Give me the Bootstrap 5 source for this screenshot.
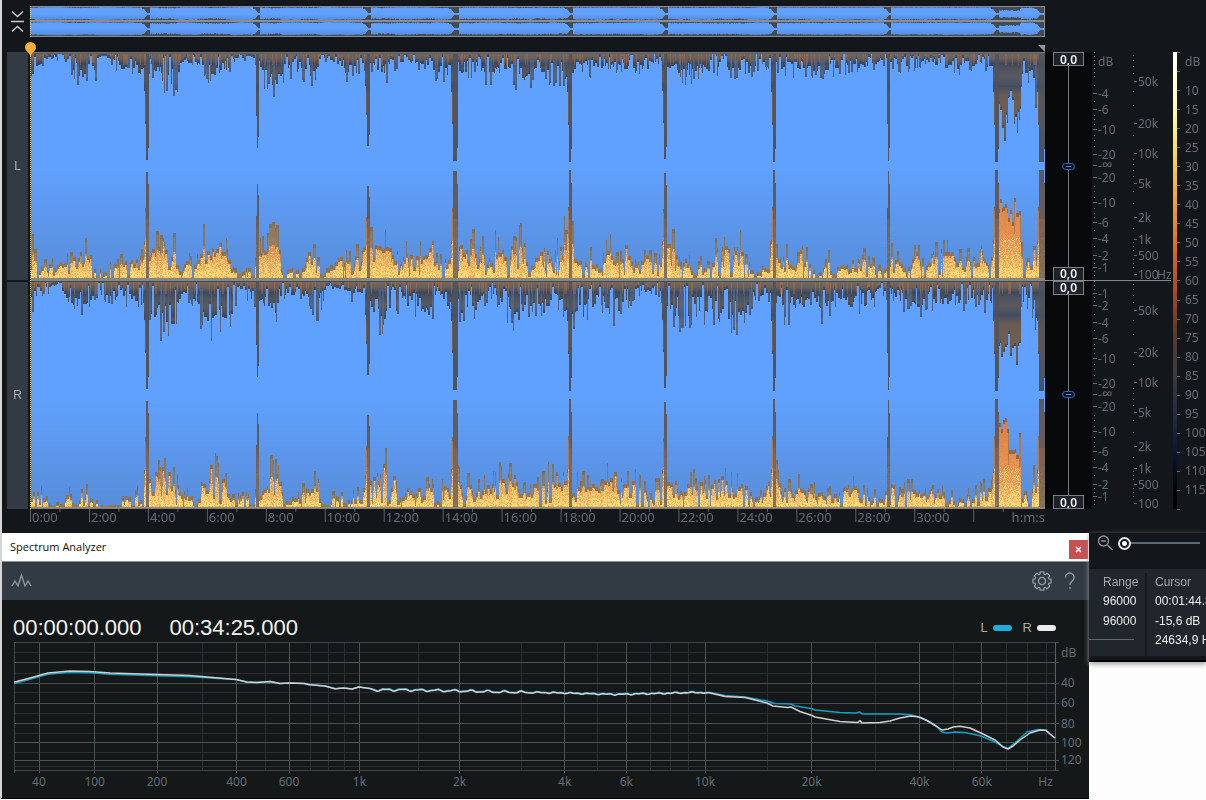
<!DOCTYPE html>
<html lang="en">
<head>
<meta charset="utf-8">
<meta name="viewport" content="width=device-width, initial-scale=1">
<title>Spectrum Analyzer</title>
<link rel="stylesheet" href="https://cdn.jsdelivr.net/npm/bootstrap@5.3.0/dist/css/bootstrap.min.css">
<style>
:root{--ink:#13171b;--dim:#646c72;--bar:#323a43}
body{background:#fdfdfd;font-family:"Liberation Sans",Arial,sans-serif;font-size:12px;line-height:18px;overflow-x:hidden}
svg{display:block}
.scale{font-family:"Noto Sans","Open Sans",sans-serif;font-size:12px;fill:var(--dim)}
.editor{background:var(--ink);border-left:2px solid #d5d5d5;padding-top:6px}
.gutter{width:28px}
.side{width:161px}
.overview{height:31px}
.overview canvas,.waves canvas{width:100%;height:100%;display:block}
.pins{height:15px}
.waves{height:457px}
.channel-tag{background:var(--bar);color:#a9afb5;margin-left:5px;margin-right:2px}
.gain{width:47px;background:#08090b}
.gain-rail{width:1px;background:#72767a}
.gain-box{width:31px;height:14px;background:#1c2227;border:1px solid #7b8085;color:#eee;font:600 12px/12px "Noto Sans",sans-serif;text-align:center;padding:0}
.gain-knob{width:13px;height:7px;border:1px solid #2a6fc4;border-radius:4px;background:#08131f;padding:0}
.gain-knob::before{content:"";display:block;width:5px;height:1px;margin:2px auto;background:#4b94ee}
.playhead{left:0;top:4px;width:1px;height:453px;background:repeating-linear-gradient(#e6cf4e 0 1px,#222 1px 2px)}
.pin{left:-6px;top:-10px}
.endmark{right:0;top:-7px}
.timeline{height:24px}
.timeline svg{font-size:13px}
.analyzer{background:#141819;border-left:2px solid #d5d5d5;border-bottom:1px solid #000;height:266px;min-width:0}
.title-row{height:29px;background:#fff;color:#111;font-family:"Open Sans","Noto Sans",sans-serif;font-size:11px;border-bottom:1px solid #8b9094}
.close-btn{width:19px;height:19px;background:#c75050;color:#fff;border:0;padding:0;margin-top:4px;margin-right:1px}
.tool-row{height:38px;background:var(--bar);gap:10px;padding-left:8px;padding-right:12px}
.tool-row button{background:none;border:0;padding:0;color:#949ba2}
.clock-row{padding:15px 33px 1px 11px}
.clock{font-size:22px;line-height:26px;color:#f1f1f1}
.swatch-l,.swatch-r{width:19px;height:6px;border-radius:3px}
.swatch-l{background:#1eaddb;margin-right:11px}
.swatch-r{background:#ececec}
.legend-text{font-size:13px;color:#a4a9ad;margin-right:5px}
.plot-row{padding-left:12px}
.freq-row{padding-left:12px;padding-right:34px}
.plot{height:128px;min-width:0}
.info{width:117px;height:129px;background:var(--ink);border-bottom:2px solid #000;box-shadow:0 2px 5px #999;overflow:hidden;white-space:nowrap}
.zoom-row{height:36px;padding-bottom:16px;padding-left:8px}
.readouts{height:87px;background:#20262b;color:#ededed}
.readouts h2{font-size:12px;line-height:18px;margin:0;color:#a2a7ab;font-weight:400}
.range-col{width:58px;border-right:2px solid #15191c}
.range-col p{margin:0;line-height:20px}
.range-text{padding-left:14px}
.range-end{height:1px;width:45px;background:#5f686e}
.zoom{appearance:none;width:82px;height:14px;background:linear-gradient(#5a6a72,#5a6a72) 8px 6px/74px 2px no-repeat}
.zoom::-webkit-slider-thumb{appearance:none;width:13px;height:13px;border-radius:50%;background:radial-gradient(circle,#fff 0 2px,#14181c 3px 4px,#e8e8e8 5px)}
</style>
</head>
<body>
<main class="editor">
  <div class="d-flex">
    <div class="gutter flex-shrink-0">
      <svg width="28" height="31" fill="none" stroke="#c5c9cc" stroke-width="1.500"><path d="M10 5.500l5.500 5 5.500-5M10 25.500l5.500-5 5.500 5M9 15.500h13"/></svg>
    </div>
    <div class="overview flex-grow-1"><canvas id="overview" width="1015" height="31" aria-label="Overview"></canvas></div>
    <div class="side flex-shrink-0"></div>
  </div>
  <div class="pins"></div>
  <div class="d-flex waves">
    <div class="gutter flex-shrink-0 d-flex flex-column" style="gap:2px">
      <div class="channel-tag flex-fill d-flex align-items-center justify-content-center">L</div>
      <div class="channel-tag flex-fill d-flex align-items-center justify-content-center">R</div>
    </div>
    <div class="flex-grow-1 position-relative">
      <canvas id="wave" width="1015" height="457" aria-label="Waveform and spectrogram"></canvas>
      <div class="playhead position-absolute"></div>
      <svg class="pin position-absolute" width="13" height="15"><path d="M6.500 14.500C5 10 1 9 1 5.500A5.500 5.500 0 0 1 12 5.500C12 9 8 10 6.500 14.500z" fill="#f5ae35"/></svg>
      <svg class="endmark position-absolute" width="7" height="7"><path d="M0 0h7v7z" fill="#92969a"/></svg>
    </div>
    <div class="side flex-shrink-0 d-flex">
      <div class="gain flex-shrink-0 d-flex flex-column" id="gain"></div>
      <svg class="scale flex-shrink-0" id="rulers" width="114" height="457" overflow="visible"></svg>
    </div>
  </div>
  <div class="timeline d-flex">
    <div class="gutter flex-shrink-0"></div>
    <div class="flex-grow-1"><svg class="scale" id="times" width="100%" height="24"></svg></div>
    <div class="side flex-shrink-0"></div>
  </div>
</main>

<div class="d-flex align-items-start">
  <section class="analyzer flex-grow-1 d-flex flex-column">
    <header class="title-row d-flex align-items-center justify-content-between ps-2 flex-shrink-0">
      <span>Spectrum Analyzer</span>
      <button class="close-btn d-flex align-items-center justify-content-center" type="button" aria-label="Close"><svg width="7" height="7" stroke="#fff" stroke-width="1.500"><path d="M1 1l5 5M6 1l-5 5"/></svg></button>
    </header>
    <div class="tool-row d-flex align-items-center flex-shrink-0">
      <button type="button" aria-label="Spectrum"><svg width="22" height="16" fill="none" stroke="currentColor" stroke-width="1.300"><path d="M2 13L5 8l3 5L11.500 2l3.500 11 3-5 3 5"/></svg></button>
      <button class="ms-auto" type="button" aria-label="Settings"><svg id="gear" width="22" height="22" viewBox="-11 -11 22 22" fill="none" stroke="currentColor" stroke-width="1.300"></svg></button>
      <button type="button" aria-label="Help"><svg width="14" height="20" fill="none" stroke="currentColor" stroke-width="1.400"><path d="M2.500 6.500a4.300 4.300 0 1 1 7.200 3C8 11 7 11.500 7 14M7 16v2"/></svg></button>
    </div>
    <div class="clock-row d-flex align-items-center flex-shrink-0">
      <span class="clock me-4">00:00:00.000</span><span class="clock ms-1">00:34:25.000</span>
      <span class="legend-text ms-auto">L</span><span class="swatch-l"></span>
      <span class="legend-text">R</span><span class="swatch-r"></span>
    </div>
    <div class="plot-row d-flex flex-shrink-0">
      <svg class="plot flex-grow-1" id="plot" viewBox="14 642 1041 128" preserveAspectRatio="none" width="100" overflow="visible" fill="none"></svg>
      <svg class="scale flex-shrink-0" id="levels" width="34" height="129"></svg>
    </div>
    <div class="freq-row"><svg class="scale" id="freqs" width="100%" height="24" overflow="visible"></svg></div>
  </section>
  <aside class="info flex-shrink-0">
    <div class="zoom-row d-flex align-items-center gap-1">
      <svg class="flex-shrink-0" width="17" height="18" fill="none" stroke="#8d9398" stroke-width="1.400"><circle cx="6.500" cy="7" r="5"/><path d="M4 7h5M10.500 11l5 5"/></svg>
      <input class="zoom flex-shrink-0" type="range" min="0" max="100" value="0" aria-label="Zoom">
    </div>
    <div class="readouts d-flex pt-1">
      <div class="range-col flex-shrink-0">
        <div class="range-text"><h2>Range</h2><p>96000</p><p>96000</p></div>
        <div class="range-end mt-2"></div>
      </div>
      <div class="ps-2">
        <h2>Cursor</h2><div style="line-height:20px">00:01:44.800</div><div style="line-height:20px">-15,6 dB</div><div>24634,9 Hz</div>
      </div>
    </div>
  </aside>
</div>

<script src="https://cdn.jsdelivr.net/npm/bootstrap@5.3.0/dist/js/bootstrap.bundle.min.js"></script>
<script>
// Envelope tables: pairs of horizontal position and distance from the channel edge.
const ENV = {
 lt:[30,27,35,20,45,6,60,4,68,18,80,25,95,18,100,4,115,8,118,20,130,12,138,22,150,14,160,30,177,30,183,10,195,10,212,24,225,18,240,6,252,4,260,20,275,36,285,18,300,20,315,27,322,5,335,10,345,20,360,14,375,15,382,28,390,15,400,10,430,14,440,26,455,24,475,16,490,24,500,14,520,28,545,20,560,28,580,20,600,15,620,14,635,20,660,12,680,22,700,22,720,14,745,25,760,8,785,18,800,16,820,20,840,15,860,15,880,10,900,13,930,11,955,18,975,13,992,14,994,60,999,66,1004,84,1008,54,1010,45,1015,80,1019,70,1021,30,1030,22,1035,40,1037,30,1039,65,1045,50],
 lb:[30,45,33,38,36,3,42,15,55,15,65,20,75,24,82,30,92,25,96,3,103,8,115,16,125,24,137,20,143,26,150,30,160,40,168,46,175,30,180,5,186,22,195,14,202,40,210,44,218,36,228,26,232,8,240,6,248,13,253,5,258,30,265,38,277,47,281,15,285,3,290,18,295,6,302,28,312,32,320,8,330,10,340,24,350,18,362,30,370,36,383,44,392,38,400,24,415,32,425,34,431,44,438,14,448,24,455,24,460,34,475,38,490,32,500,40,507,20,514,42,525,40,530,8,535,40,545,42,553,18,560,42,572,46,575,20,585,18,590,24,600,10,612,42,617,12,625,33,635,15,645,24,660,22,668,42,672,40,680,14,686,34,692,4,702,18,710,12,718,40,730,30,740,38,745,20,752,4,765,18,775,32,785,24,795,18,802,33,810,14,820,4,828,24,835,12,850,18,860,26,870,18,880,8,888,30,895,24,905,18,915,30,925,12,935,35,945,30,955,30,962,14,975,34,982,34,990,15,994,65,999,76,1004,85,1008,70,1014,75,1019,75,1021,28,1030,32,1034,44,1037,3,1039,90,1045,10],
 rt:[30,24,36,16,45,6,60,6,68,22,78,25,90,20,98,6,115,22,130,16,140,28,160,43,175,40,180,15,190,14,202,36,215,46,230,36,240,8,255,20,262,24,275,38,283,12,290,14,305,14,318,32,325,4,345,10,355,18,375,40,392,34,400,24,415,28,430,34,437,8,450,32,470,34,480,22,490,10,505,28,518,38,530,24,545,32,552,12,565,33,580,36,590,32,600,18,613,32,625,24,635,12,650,10,660,14,675,36,685,34,700,28,725,40,745,34,755,14,770,14,780,30,795,34,810,20,822,32,835,20,855,30,870,20,885,10,900,20,918,25,930,22,955,21,975,18,992,24,994,60,1000,66,1004,76,1008,66,1012,72,1016,80,1019,70,1021,20,1030,20,1035,48,1037,30,1039,70,1045,55],
 rb:[30,16,35,20,43,12,50,4,60,3,68,16,75,3,82,23,95,16,98,3,118,4,125,15,130,4,137,16,142,3,144,27,152,36,165,44,178,28,182,12,190,16,197,10,202,43,212,44,220,36,229,26,233,5,245,20,252,10,262,20,270,38,280,38,283,8,295,10,305,22,318,30,322,3,340,18,347,4,358,18,364,22,372,32,385,44,392,38,398,12,420,32,432,24,445,22,460,34,475,22,490,24,500,34,515,32,525,16,540,28,552,32,560,40,572,28,580,25,600,25,612,38,625,27,640,27,650,12,665,35,680,24,700,27,715,28,725,34,745,24,755,8,775,36,785,20,800,24,815,18,830,16,850,24,865,14,880,14,890,28,900,14,910,22,925,18,940,24,945,4,955,18,965,10,975,20,985,20,992,24,994,60,1001,80,1005,80,1010,58,1016,68,1019,74,1021,3,1024,25,1030,5,1034,40,1037,20,1039,85,1045,10]
};
// Quiet passages: first column, last column, reach towards the centre line.
const GAPS = [[145,148,108],[256,258,96],[366,369,94],[452,457,109],[568,571,110],[663,666,107],[772,775,110],[887,889,109],[994,998,110],[1038,1044,110]];
let seed = 71;
const rnd = () => (seed = (seed * 1664525 + 1013904223) >>> 0) / 4294967296;
function at(list, x){
  for (let i = 0; i < list.length - 2; i += 2)
    if (x < list[i+2]) return list[i+1] + (list[i+3]-list[i+1]) * (x-list[i]) / (list[i+2]-list[i]);
  return list[list.length-1];
}
function columns(list, upper){
  const out = []; let x = 0;
  while (x < 1015){
    const w = 1 + Math.floor(rnd()*(upper?2:2.6)), r = rnd();
    let k = r < .12 ? .1 + rnd()*.25 : r < .3 ? .4 + rnd()*.2 : r > .78 ? 1.05 + rnd()*.35 : .65 + rnd()*.4;
    const px = x + 30, quiet = (px > 997 && px < 1021) || px > 1037;
    if (quiet) k = .78 + rnd()*.38;
    const add = r > .78 && !quiet ? 4*rnd() : 0;
    for (let i = 0; i < w && x < 1015; i++, x++) out.push({h: Math.max(1, at(list, px) * k + add), soft: r > .78 && !quiet});
  }
  for (const [a,b,h] of GAPS) for (let i = a; i <= b; i++){
    const edge = i === a ? .66 : i === b ? .88 : 1;
    out[i-30] = {h: h*edge, gap: i > a || b-a < 3, wall: true};
    if (i === a && b-a > 2) out[i-31] = {h: Math.max(h*.36, out[i-31].h), wall: true};
  }
  return out;
}
const mix = (a,b,t) => a.map((v,i) => v + (b[i]-v)*t);
function ramp(stops, v){
  for (let i = 0; i < stops.length-1; i++)
    if (v <= stops[i+1][0]) return mix(stops[i][1], stops[i+1][1], Math.max(0,(v-stops[i][0])/(stops[i+1][0]-stops[i][0])));
  return stops[stops.length-1][1];
}
const TOP = [[0,[120,106,94]],[6,[104,94,90]],[11,[62,72,92]],[16,[76,82,94]],[24,[90,90,94]],[34,[66,77,100]],[42,[104,92,84]],[62,[112,94,80]],[110,[92,88,88]]];
const LOW = [[0,[232,140,70]],[3,[255,216,118]],[12,[250,196,104]],[26,[238,164,90]],[44,[232,148,82]],[82,[220,132,72]],[112,[140,96,76]]];
const cv = document.getElementById('wave'), cx = cv.getContext('2d'), im = cx.createImageData(1015,457);
const put = (x,y,c) => { const p = (y*1015+x)*4; im.data[p]=c[0]; im.data[p+1]=c[1]; im.data[p+2]=c[2]; im.data[p+3]=255; };
[[0,ENV.lt,ENV.lb],[229,ENV.rt,ENV.rb]].forEach(([off,t,b]) => {
  const top = columns(t,true), low = columns(b,false);
  for (let x = 0; x < 1015; x++){
    const warm = rnd(), tc = top[x], lc = low[x];
    const outer = !!(low[x-1] && low[x-1].h < lc.h*.8) || !!(low[x+1] && low[x+1].h < lc.h*.8);
    for (let y = 0; y < 228; y++){
      const up = 227-y, n = rnd();
      let c = y < 114 ? [96,161,255] : mix([96,161,255],[88,140,216],(y-114)/114);
      if (y < tc.h){
        c = ramp(TOP,y);
        if (warm > .78 && y < 13 && !tc.gap) c = mix(c,[176,112,70],.45);
        if (tc.h - y < 3) c = mix(c,[62,70,84],.7);
        if (tc.gap) c = mix(c,[78,82,92],.8);
        if (tc.soft && !tc.wall && y > 7) c = mix(c,[84,120,172],.4);
      } else if (up < lc.h && y >= 114){
        c = mix(ramp(LOW,up),[255,228,136], n < .25 && up < 42 ? .6 : 0);
        if (n > .7) c = mix(c,[212,124,64],.35);
        const rest = lc.h - up;
        if (rest < 4) c = mix(c,[122,92,66],.75);
        if (outer && up > lc.h*.55) c = mix(c,[124,104,78],.5);
        if (lc.soft && !lc.wall) c = mix(c,[120,114,100], up > lc.h*.6 ? .75 : .12);
        if (lc.gap) c = mix([92,88,90], c, up > 60 ? .08 : .22);
      }
      put(x, y+off, c);
    }
  }
});
for (let x = 0; x < 1015; x++){
  put(x,0,[110,116,120]); put(x,1,[88,92,96]);
  for (const y of [226,227,228]) put(x,y,[134,134,130]);
  put(x,229,[70,72,76]); put(x,455,[150,136,106]); put(x,456,[126,130,132]);
}
cx.putImageData(im,0,0);

// Overview strip: quiet passages narrow each channel towards its centre
const ov = document.getElementById('overview').getContext('2d');
ov.fillStyle = '#60a1ff'; ov.fillRect(0,0,1015,31);
for (const [off,e] of [[1,[ENV.lt,ENV.lb]],[16,[ENV.rt,ENV.rb]]]){
  const g = ov.createLinearGradient(0,off,0,off+14); g.addColorStop(.5,'rgba(84,134,205,0)'); g.addColorStop(1,'#568ad4');
  ov.fillStyle = g; ov.fillRect(0,off,1015,14);
  ov.fillStyle = '#454b55';
  for (let x = 0; x < 1015; x++){
    const px = x + 30, gap = GAPS.find(q => px >= q[0]-3 && px <= q[1]+1);
    const ending = px > 998 && px < 1020;
    const reach = gap ? Math.max(2, Math.min(6, (px - gap[0] + 3)*1.3)) : 0;
    const h1 = ending ? 3+rnd() : Math.max(reach, at(e[0],px)*(.02+rnd()*.025));
    const h2 = ending ? 3+rnd() : Math.max(reach, .6 + at(e[1],px)*(.025+rnd()*.03));
    ov.fillRect(x,off,1,h1); ov.fillRect(x,off+14-h2,1,h2);
  }
}
ov.fillStyle = '#8b8d8e'; ov.fillRect(0,0,1015,1); ov.fillRect(0,14,1015,2); ov.fillRect(0,30,1015,1); ov.fillRect(1014,0,1,31);
ov.fillStyle = '#d8c658'; for (let y = 0; y < 31; y += 2) ov.fillRect(0,y,1,1);

// Gain column: a box at each end of both channels with a knob between them
document.getElementById('gain').innerHTML = ['Left','Right'].map(n =>
  `<div class="d-flex flex-column align-items-center flex-fill"><input class="gain-box" value="0,0" aria-label="${n} upper gain"><div class="gain-rail flex-fill"></div><button class="gain-knob" type="button" aria-label="${n} level"></button><div class="gain-rail flex-fill"></div><input class="gain-box" value="0,0" aria-label="${n} lower gain"></div>`).join('');

// Level, frequency and colour rulers
const txt = (x,y,s,extra='') => `<text x="${x}" y="${y}" ${extra}>${s}</text>`;
const box = (x,y,w,h,f='#646c72') => `<rect x="${x}" y="${y}" width="${w}" height="${h}" fill="${f}"/>`;
let r = '<defs><linearGradient id="heat" x1="0" y1="0" x2="0" y2="1"><stop offset="0" stop-color="#fff"/><stop offset=".08" stop-color="#ffffd2"/><stop offset=".16" stop-color="#fdf388"/><stop offset=".25" stop-color="#f6c94c"/><stop offset=".33" stop-color="#f0a038"/><stop offset=".43" stop-color="#dc6824"/><stop offset=".52" stop-color="#a84c20"/><stop offset=".61" stop-color="#603828"/><stop offset=".7" stop-color="#3c3a40"/><stop offset=".8" stop-color="#222a3c"/><stop offset=".87" stop-color="#08183c"/><stop offset=".95" stop-color="#030509"/><stop offset="1" stop-color="#000"/></linearGradient></defs>';
r += txt(6,14,'dB');
for (const off of [0,229]){
  const marks = [[41,'-4'],[57,'-6'],[77,'-10'],[102,'-20'],[113,'-<tspan font-size="15">∞</tspan>'],[125,'-20'],[150,'-10'],[170,'-6'],[186,'-4'],[203,'-2'],[215,'-1']];
  if (off) marks.unshift([12,'-1'],[24,'-2']);
  for (const [y,s] of marks) r += box(1,y+off,4,1) + txt(6,y+off+5,s);
  for (const y of [0,4,8,12,16,20,24,33,49,63,67,72,83,88,94,134,139,145,156,161,165,178,194,207,211,219,223]) r += box(2,y+off,1,1);
  for (const [y,s] of [[29,'50k'],[71,'20k'],[101,'10k'],[131,'5k'],[165,'2k'],[187,'1k'],[203,'500'],[222,'100']]) r += box(42,y+off,3,1) + txt(46,y+off+5,s);
  for (const y of [3,8,14,21,39,53,83,107,112,118,124,139,151,176,190,194,198,207,211,215]) r += box(41,y+off,1,1);
}
r += txt(65,227,'Hz') + box(-47,228,126,1,'#85898c') + box(81,0,4,457,'url(#heat)') + txt(93,14,'dB');
for (let i = 0; i < 25; i++) r += box(85, Math.round(i*19.04), 3, 1);
for (let i = 0; i < 22; i++) r += txt(93, Math.round(42.500+i*19.04), 10+i*5);
document.getElementById('rulers').innerHTML = r;

// Time ruler
let tm = '';
for (let i = 0; i <= 16; i++){
  const p = i*5.808;
  tm += `<rect x="${p}%" width="1" height="13" fill="#5b6369"/><rect x="${p+2.904}%" width="1" height="3" fill="#5b6369"/>`;
  if (i < 16) tm += `<svg x="${p}%" overflow="visible">${txt(2,13,i*2+':00')}</svg>`;
}
document.getElementById('times').innerHTML = tm + txt('100%',13,'h:m:s','text-anchor="end"');

// Spectrum plot
const major = [39,94.700,157,236.500,289,359.500,459.700,564.700,626.300,705,811.500,919.500,981.800];
const minor = [202.500,265,310.500,328.500,344.500,418,521.500,597.700,650,670.500,688.700,767.500,875,953.600,1006.600,1027,1046];
const line = (d,c,w=1) => `<path d="${d}" stroke="${c}" stroke-width="${w}" vector-effect="non-scaling-stroke" stroke-linejoin="round"/>`;
let g = '';
for (const x of minor) g += line(`M${Math.floor(x)+.5} 642V771`,'#292e33');
for (const y of [652,673,692,713,733,752,766]) g += line(`M14 ${y+.5}H1055`,'#292e33');
for (const x of major) g += line(`M${Math.floor(x)+.5} 642V773`,'#4b5358');
for (const y of [662,683,703,723,742,760]) g += line(`M14 ${y+.5}H1059`,'#4b5358');
g += line('M14.500 642V773M14 642.500H1059M14 770.500H1059','#3f464b') + line('M1055.500 642V771','#575e64');
const tail = [1003,747,1008,749,1013,746,1020,740,1030,733,1040,730,1046,730.5,1050,734,1055,738];
const head = [14,682.300,30,678,48,673,70,671,90,671.500,110,673,157,674.500,190,675.500,236,679.500,247,682,257,682.500,270,681.500,280,683.500,290,683,304,683.500,310,684.700,325,686,335,688.800,344,688,352,689,359,687,370,688.500];
const body = [[377,690],[400,690],[460,691],[500,692],[560,693],[615,694.500],[660,693.500],[697,692.500],[710,693.500]].flat();
const wob = [];
for (let x = 375; x < 710; x += 2) wob.push(x, at(body,x) + Math.sin(x/2.7)*(x<530?.9:.4) + Math.sin(x/1.3)*.4);
const white = [...head,...wob,725,696.500,735,697,745,697.500,755,700,767,703,773,706,788,707.500,791,707,800,711.500,812,715.500,815,717,840,721.500,858,722.500,860,720.500,862,723,880,722.500,890,721,900,718,911,716,919,717,927,720.500,936,726,942,730,948,729,953,727,960,726.200,970,728,981,733,995,740,...tail];
const blue = [...head.map((v,i)=>i%2&&head[i-1]<230?v+1.300:v),...wob.map((v,i)=>i%2?v-.5:v),725,695.500,745,697,767,701,775,703.500,791,704,795,706,811,708.500,815,710,840,712.500,855,713,860,712,862,714,900,714,911,715,919,717,927,720.500,936,726,942,732,947,733,955,732,965,732.500,981,736,995,742,1003,746.5,1008,748.500,1017,741,1027,732,1038,729.5,1046,730,1050,734,1055,738];
const poly = a => { let d = 'M'+a[0]+' '+a[1]; for (let i = 2; i < a.length; i += 2) d += 'L'+a[i]+' '+a[i+1]; return d; };
document.getElementById('plot').innerHTML = g + line(poly(blue),'#189bc4',1.5) + line(poly(white),'#cfd0d0',1.5);
document.getElementById('levels').innerHTML = [[11,'dB'],[41,'40'],[61,'60'],[82,'80'],[101,'100'],[118,'120']].map(([y,s]) => txt(6,y+4,s)).join('');
document.getElementById('freqs').innerHTML = ['40','100','200','400','600','1k','2k','4k','6k','10k','20k','40k','60k'].map((s,i) => txt(((major[i]-14)/10.41).toFixed(2)+'%',15,s,'text-anchor="middle"')).join('') + txt('99.1%',15,'Hz','text-anchor="middle"');

// Gear outline with eight teeth
let gd = '';
for (let i = 0; i < 8; i++) [[-.30,7.200],[-.20,9.300],[.20,9.300],[.30,7.200]].forEach(([da,rad]) => {
  const a = i*Math.PI/4 + da; gd += (gd ? 'L' : 'M') + (Math.cos(a)*rad).toFixed(1) + ' ' + (Math.sin(a)*rad).toFixed(1);
});
document.getElementById('gear').innerHTML = `<path d="${gd}z" stroke-linejoin="round"/><circle r="3.600"/>`;
</script>
</body>
</html>
